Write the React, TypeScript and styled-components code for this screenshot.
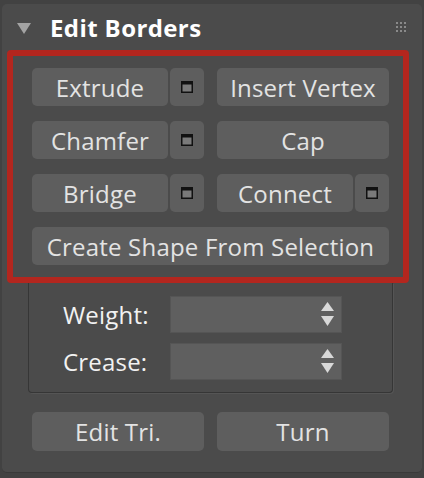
import React from "react";
import styled, { createGlobalStyle } from "styled-components";

const Global = createGlobalStyle`
  html, body { margin: 0; padding: 0; background: #424242; }
  body { font-family: "Open Sans", "Noto Sans", sans-serif; }
`;

const Panel = styled.div`
  margin: 4px 2px 0 2px;
  width: 420px;
  height: 469px;
  box-sizing: border-box;
  background: #4b4b4b;
  border-radius: 5px;
  border-bottom: 1px solid #3a3a3a;
  display: flex;
  flex-direction: column;
`;

const Header = styled.div`
  height: 46px;
  display: flex;
  align-items: center;
  padding: 0 14px 0 15px;
  box-sizing: border-box;
`;

const Arrow = styled.div`
  width: 0;
  height: 0;
  border-left: 7px solid transparent;
  border-right: 7px solid transparent;
  border-top: 11px solid #a3a3a3;
  margin-right: 19px;
  margin-top: 2px;
`;

const Title = styled.div`
  font-family: "Open Sans", sans-serif;
  font-weight: 700;
  font-size: 24px;
  color: #ffffff;
  flex: 1;
  letter-spacing: 0.4px;
  margin-top: 1px;
`;

const Grip = styled.div`
  display: grid;
  grid-template-columns: repeat(3, 2px);
  grid-auto-rows: 2px;
  gap: 2px;
  margin-right: 2px;
  & > span { background: #8a8a8a; }
`;

const Highlight = styled.div`
  margin-left: 5px;
  width: 402px;
  box-sizing: border-box;
  border: 6px solid #b3261e;
  border-radius: 4px;
  padding: 12px 14px 12px 19px;
  display: flex;
  flex-direction: column;
  gap: 15px;
`;

const Row = styled.div`
  display: flex;
  height: 38px;
`;

const Btn = styled.div<{ $w: number; $gap?: number }>`
  width: ${(p) => p.$w}px;
  margin-right: ${(p) => p.$gap ?? 0}px;
  height: 100%;
  background: #5e5e5e;
  border-radius: 5px;
  display: flex;
  align-items: center;
  justify-content: center;
  color: #e3e3e3;
  font-size: 24px;
  letter-spacing: 0.2px;
  font-family: "Open Sans", sans-serif;
  white-space: nowrap;
  box-sizing: border-box;
`;

const WinIcon = () => (
  <svg width="12" height="12" viewBox="0 0 12 12">
    <rect x="0.75" y="0.75" width="10.5" height="10.5" fill="#7a7a7a" stroke="#111" strokeWidth="1.5" />
    <rect x="0" y="0" width="12" height="3.5" fill="#111" />
  </svg>
);

const Group = styled.div`
  margin-left: 26px;
  width: 365px;
  box-sizing: border-box;
  border: 1px solid #363636;
  border-top: none;
  border-radius: 0 0 4px 4px;
  box-shadow: 1px 1px 0 #555;
  padding: 13px 0 12px 34px;
  display: flex;
  flex-direction: column;
  gap: 10px;
`;

const Field = styled.div`
  display: flex;
  align-items: center;
  height: 37px;
`;

const Label = styled.div`
  width: 107px;
  color: #f2f2f2;
  font-size: 24px;
  letter-spacing: 0.2px;
  font-family: "Open Sans", sans-serif;
`;

const Spinner = styled.div`
  width: 172px;
  height: 37px;
  box-sizing: border-box;
  background: #5f5f5f;
  border: 1px solid #555;
  display: flex;
  justify-content: flex-end;
  align-items: center;
  padding-right: 7px;
`;

const SpinArrows = () => (
  <svg width="13" height="25" viewBox="0 0 13 25">
    <polygon points="6.5,0 13,9 0,9" fill="#d8d8d8" />
    <polygon points="0,14 13,14 6.5,24" fill="#d8d8d8" />
  </svg>
);

const BottomRow = styled.div`
  display: flex;
  height: 39px;
  margin: 19px 0 0 30px;
`;

export default function App() {
  return (
    <>
      <Global />
      <Panel>
        <Header>
          <Arrow />
          <Title>Edit Borders</Title>
          <Grip>
            {Array.from({ length: 9 }).map((_, i) => (
              <span key={i} />
            ))}
          </Grip>
        </Header>
        <Highlight>
          <Row>
            <Btn $w={136} $gap={2}>Extrude</Btn>
            <Btn $w={34} $gap={13}><WinIcon /></Btn>
            <Btn $w={172}>Insert Vertex</Btn>
          </Row>
          <Row>
            <Btn $w={136} $gap={2}>Chamfer</Btn>
            <Btn $w={34} $gap={13}><WinIcon /></Btn>
            <Btn $w={172}>Cap</Btn>
          </Row>
          <Row>
            <Btn $w={136} $gap={2}>Bridge</Btn>
            <Btn $w={34} $gap={13}><WinIcon /></Btn>
            <Btn $w={136} $gap={2}>Connect</Btn>
            <Btn $w={34}><WinIcon /></Btn>
          </Row>
          <Row>
            <Btn $w={357}>Create Shape From Selection</Btn>
          </Row>
        </Highlight>
        <Group>
          <Field>
            <Label>Weight:</Label>
            <Spinner><SpinArrows /></Spinner>
          </Field>
          <Field>
            <Label>Crease:</Label>
            <Spinner><SpinArrows /></Spinner>
          </Field>
        </Group>
        <BottomRow>
          <Btn $w={172} $gap={13}>Edit Tri.</Btn>
          <Btn $w={172}>Turn</Btn>
        </BottomRow>
      </Panel>
    </>
  );
}
